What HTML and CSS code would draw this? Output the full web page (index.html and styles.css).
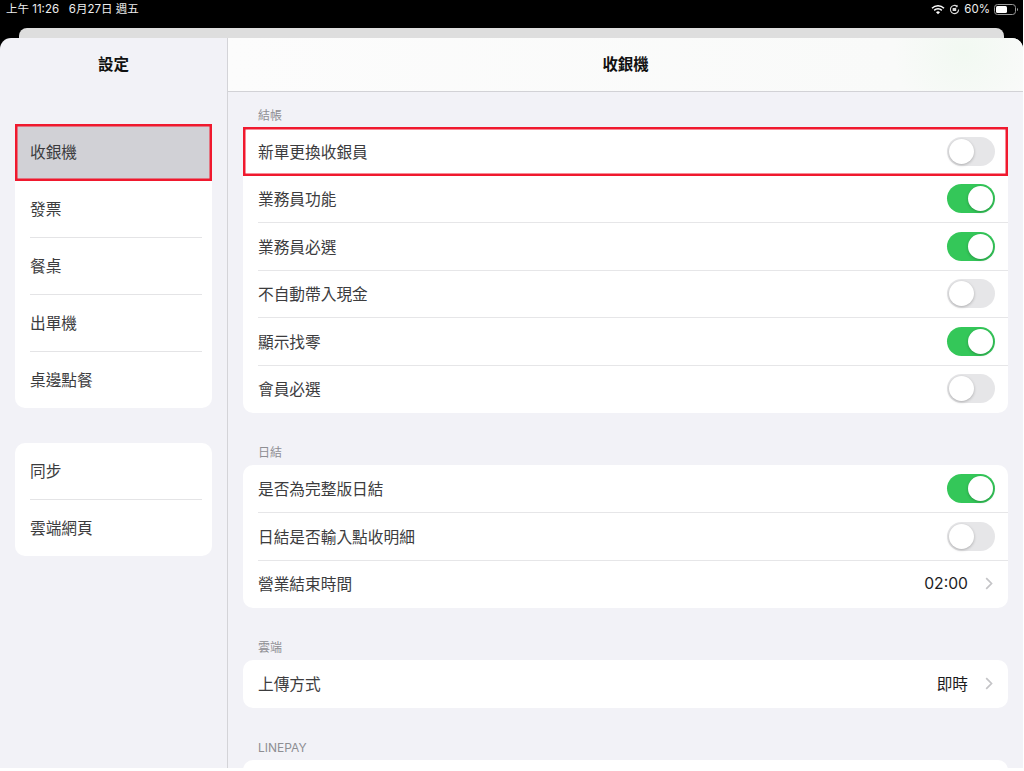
FILE: index.html
```html
<!DOCTYPE html>
<html lang="zh-Hant">
<head>
<meta charset="utf-8">
<title>設定</title>
<link rel="stylesheet" href="styles.css">
</head>
<body>
<div class="screen">
  <div class="status">
    <span>上午 11:26&nbsp;&nbsp; 6月27日 週五</span>
    <div class="status-right">
      <svg class="wifi" width="14" height="11" viewBox="0 0 14 11"><path d="M1 4.2a8.6 8.6 0 0 1 12 0" fill="none" stroke="#fff" stroke-width="1.5"/><path d="M3.2 6.4a5.4 5.4 0 0 1 7.6 0" fill="none" stroke="#fff" stroke-width="1.5"/><path d="M7 10.2 5 8.2a2.9 2.9 0 0 1 4 0z" fill="#fff"/></svg>
      <svg class="lock" width="11" height="11" viewBox="0 0 11 11"><path d="M9.6 5.5a4.1 4.1 0 1 1-1.3-3" fill="none" stroke="#ddd" stroke-width="1.1"/><path d="M8.5 .8v2.4H6.2" fill="#ddd"/><rect x="3.6" y="4" width="3.6" height="3" rx=".5" fill="#ddd"/></svg>
      <span>60%</span>
      <svg class="battery" width="24" height="11" viewBox="0 0 24 11"><rect x=".5" y=".5" width="21" height="10" rx="3" fill="none" stroke="#999"/><rect x="2" y="2" width="11" height="7" rx="1.5" fill="#fff"/><path d="M23 4v3a1.6 1.6 0 0 0 0-3z" fill="#999"/></svg>
    </div>
  </div>
  <div class="sheet-back"></div>
  <div class="sheet">
    <aside class="side">
      <h1 class="side-title">設定</h1>
      <div class="side-group first">
        <div class="side-row active">收銀機</div>
        <div class="side-row">發票</div>
        <div class="side-row">餐桌</div>
        <div class="side-row">出單機</div>
        <div class="side-row">桌邊點餐</div>
      </div>
      <div class="side-group second">
        <div class="side-row">同步</div>
        <div class="side-row">雲端網頁</div>
      </div>
    </aside>
    <main class="main">
      <header class="main-head">收銀機</header>
      <div class="main-body">
        <div class="label">結帳</div>
        <div class="group">
          <div class="row marked"><span>新單更換收銀員</span><i class="toggle"></i></div>
          <div class="row"><span>業務員功能</span><i class="toggle on"></i></div>
          <div class="row"><span>業務員必選</span><i class="toggle on"></i></div>
          <div class="row"><span>不自動帶入現金</span><i class="toggle"></i></div>
          <div class="row"><span>顯示找零</span><i class="toggle on"></i></div>
          <div class="row"><span>會員必選</span><i class="toggle"></i></div>
        </div>
        <div class="label">日結</div>
        <div class="group">
          <div class="row"><span>是否為完整版日結</span><i class="toggle on"></i></div>
          <div class="row"><span>日結是否輸入點收明細</span><i class="toggle"></i></div>
          <div class="row"><span>營業結束時間</span><div class="value">02:00<svg class="chev" width="8" height="13" viewBox="0 0 8 13"><path d="M1.2 1.2 6.5 6.5 1.2 11.8" fill="none" stroke="#c4c4c7" stroke-width="1.7"/></svg></div></div>
        </div>
        <div class="label">雲端</div>
        <div class="group">
          <div class="row"><span>上傳方式</span><div class="value">即時<svg class="chev" width="8" height="13" viewBox="0 0 8 13"><path d="M1.2 1.2 6.5 6.5 1.2 11.8" fill="none" stroke="#c4c4c7" stroke-width="1.7"/></svg></div></div>
        </div>
        <div class="label">LINEPAY</div>
        <div class="group"><div class="row"></div></div>
      </div>
    </main>
  </div>
</div>
</body>
</html>
```
FILE: styles.css
```css
* { box-sizing: border-box; }
html, body { margin: 0; padding: 0; height: 100%; overflow: hidden; background: #fff; }
body { font-family: "Inter", "Noto Sans CJK TC", sans-serif; color: #1c1c1e; }
.screen { width: 1023px; height: 768px; background: #000; display: flex; flex-direction: column; overflow: hidden; }
.status { height: 28px; flex: none; padding: 2px 5px 0 6px; display: flex; justify-content: space-between; align-items: flex-start; color: #eee; font-size: 11.5px; line-height: 14px; }
.status-right { display: flex; align-items: center; gap: 4px; height: 14px; }
.sheet-back { flex: none; height: 10px; margin: 0 19px 0 19px; background: #dedede; border-radius: 8px 8px 0 0; }
.sheet { flex: 1; min-height: 0; display: flex; background: #f2f2f7; border-radius: 11px 11px 0 0; overflow: hidden; }
.side { width: 228px; flex: none; border-right: 1px solid #d4d4d8; padding: 0 15px; }
.side-title { margin: 0; height: 53px; line-height: 53px; text-align: center; font-size: 15.5px; font-weight: 700; color: #111; }
.side-group { width: 197px; background: #fff; border-radius: 10px; }
.side-group.first { margin-top: 33px; }
.side-group.second { margin-top: 35px; }
.side-row { height: 57px; line-height: 57px; padding-left: 15px; font-size: 15.7px; color: #3c3c3e; position: relative; }
.side-row:last-child { height: 56px; }
.side-row + .side-row::before { content: ""; position: absolute; left: 15px; right: 10px; top: -1px; height: 1px; background: #e4e4e6; }
.side-row.active { background: #d1d1d6; box-shadow: inset 0 0 0 2.5px #f0192e; }
.side-row.active + .side-row::before { display: none; }
.main { flex: 1; min-width: 0; display: flex; flex-direction: column; }
.main-head { flex: none; height: 54px; line-height: 53px; text-align: center; font-size: 15.4px; font-weight: 700; color: #111; border-bottom: 1px solid #d2d2d6; background: radial-gradient(circle at 735px 14px, #f2f9f2 0, #f9faf9 70px, #fcfcfc 100%); }
.main-body { flex: 1; min-height: 0; padding: 0 15px; overflow: hidden; }
.label { height: 35.5px; padding: 15.5px 0 0 15px; font-size: 12px; line-height: 16px; color: #8e8e93; }
.group { background: #fff; border-radius: 10px; margin-bottom: 17px; }
.row { height: 47.5px; padding: 0 13px 0 15px; display: flex; align-items: center; justify-content: space-between; font-size: 15.7px; color: #3c3c3e; position: relative; }
.row + .row::before { content: ""; position: absolute; left: 15px; right: 0; top: -.5px; height: 1px; background: #e6e6e8; }
.row.marked { z-index: 1; }
.row.marked + .row::before { display: none; }
.row.marked::after { content: ""; position: absolute; left: 0; right: 0; top: -.5px; height: 49px; box-shadow: inset 0 0 0 2.5px #f0192e; }
.toggle { width: 48px; height: 29px; border-radius: 15px; background: #e6e6e8; position: relative; display: block; }
.toggle::after { content: ""; position: absolute; left: 2px; top: 2px; width: 25px; height: 25px; border-radius: 50%; background: #fff; box-shadow: 0 1px 3px rgba(0,0,0,.25); }
.toggle.on { background: #34c759; }
.toggle.on::after { left: 21px; }
.value { display: flex; align-items: center; gap: 17px; color: #1c1c1e; padding-right: 2px; }
.chev { display: block; }
```
